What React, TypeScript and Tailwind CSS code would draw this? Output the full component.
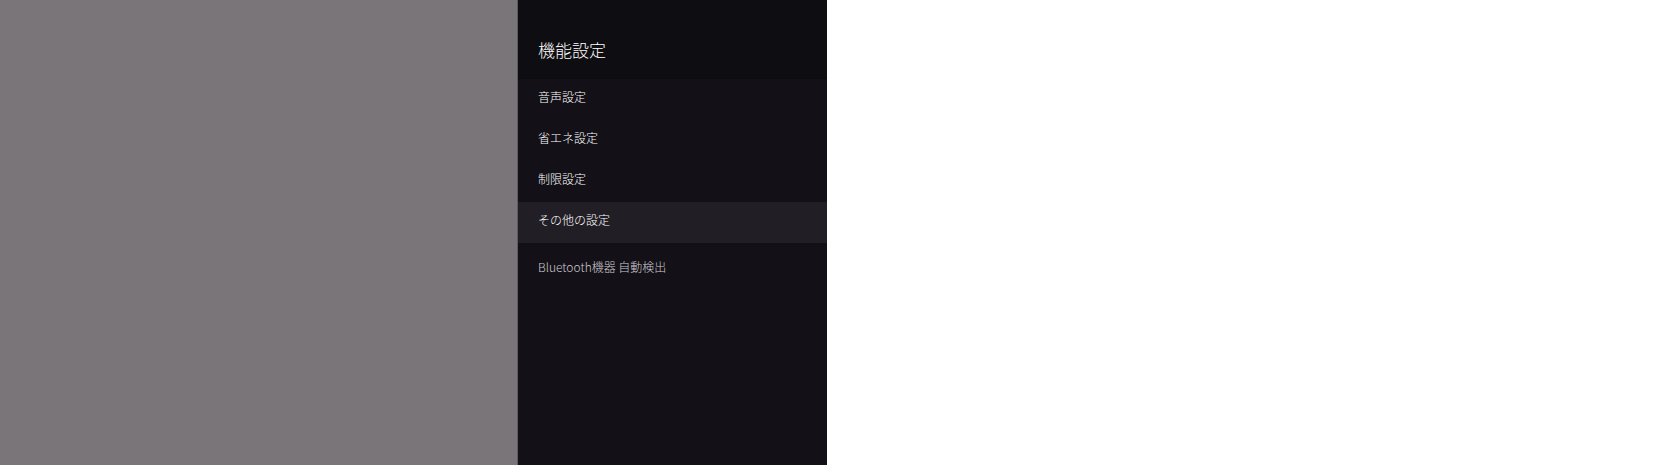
import React from 'react';

const items = ['音声設定', '省エネ設定', '制限設定', 'その他の設定'];

export default function App() {
  const active = 3;
  return (
    <div
      className="flex h-[465px] w-full bg-white"
      style={{ fontFamily: '"Noto Sans CJK JP", "Noto Sans", sans-serif' }}
    >
      {/* dimmed backdrop */}
      <div className="w-[517px] shrink-0 bg-[#7a7579]" />

      {/* settings panel */}
      <div className="flex w-[310px] shrink-0 flex-col border-l border-[#5e5a5e] bg-[#131117]">
        <div className="border-b border-[#0b0a0d] bg-[#0e0d11] px-5 pt-[38px] pb-[16px]">
          <h1 className="text-[17px] font-light leading-6 text-white">機能設定</h1>
        </div>

        <div>
          {items.map((label, i) => (
            <div
              key={label}
              className={`flex h-[41px] items-center px-5 pb-[5px] text-[12px] font-light text-white ${i === active ? 'bg-[#221e26]' : ''}`}
            >
              {label}
            </div>
          ))}
        </div>

        <div className="px-5 pt-[15px] text-[12px] font-light leading-[17px] text-[#cdc9d0]">
          Bluetooth機器 自動検出
        </div>
      </div>

      <div className="flex-1 bg-white" />
    </div>
  );
}
